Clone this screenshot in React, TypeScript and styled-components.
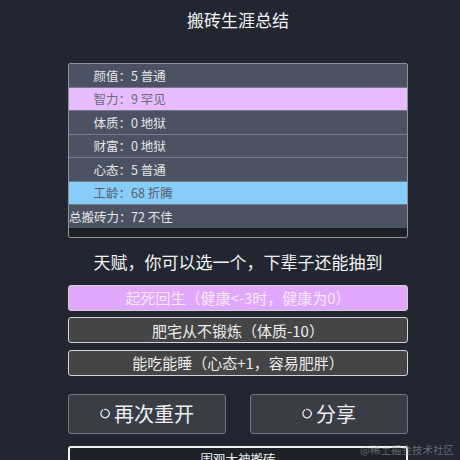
import styled, { createGlobalStyle } from 'styled-components'

const GlobalStyle = createGlobalStyle`
  html, body {
    margin: 0;
    padding: 0;
    background: #222630;
    font-family: "Noto Sans CJK SC", "Noto Sans", sans-serif;
    overflow: hidden;
  }
`

type Tone = 'plain' | 'purple' | 'blue'

const stats: { label: string; value: string; tone: Tone }[] = [
  { label: '颜值：', value: '5 普通', tone: 'plain' },
  { label: '智力：', value: '9 罕见', tone: 'purple' },
  { label: '体质：', value: '0 地狱', tone: 'plain' },
  { label: '财富：', value: '0 地狱', tone: 'plain' },
  { label: '心态：', value: '5 普通', tone: 'plain' },
  { label: '工龄：', value: '68 折腾', tone: 'blue' },
  { label: '总搬砖力：', value: '72 不佳', tone: 'plain' },
]

const talents = [
  { text: '起死回生（健康<-3时，健康为0）', picked: true },
  { text: '肥宅从不锻炼（体质-10）', picked: false },
  { text: '能吃能睡（心态+1，容易肥胖）', picked: false },
]

const rowBg: Record<Tone, string> = {
  plain: '#4b5261',
  purple: '#e6bcff',
  blue: '#87cdf9',
}

const rowInk: Record<Tone, string> = {
  plain: '#e4e6ea',
  purple: '#6e6a78',
  blue: '#56606a',
}

function Spinner() {
  return (
    <svg width="11" height="11" viewBox="0 0 12 12">
      <path
        d="M3 2.2 A4.6 4.6 0 1 0 5.2 1.45"
        fill="none"
        stroke="#e8e8ea"
        strokeWidth="1.4"
        strokeLinecap="round"
      />
    </svg>
  )
}

export default function App() {
  return (
    <>
      <GlobalStyle />
      <Page>
        <Main>
          <Title>搬砖生涯总结</Title>
          <StatTable>
            {stats.map(s => (
              <StatRow key={s.label} $tone={s.tone}>
                <StatLabel>{s.label}</StatLabel>
                <span>{s.value}</span>
              </StatRow>
            ))}
            <TableTail />
          </StatTable>
          <Subtitle>天赋，你可以选一个，下辈子还能抽到</Subtitle>
          <TalentList>
            {talents.map(t => (
              <TalentButton key={t.text} $picked={t.picked}>
                {t.text}
              </TalentButton>
            ))}
          </TalentList>
          <ActionRow>
            <ActionButton>
              <Spinner />
              再次重开
            </ActionButton>
            <ActionButton>
              <Spinner />
              分享
            </ActionButton>
          </ActionRow>
          <WatchButton>围观大神搬砖</WatchButton>
        </Main>
        <Watermark>@稀土掘金技术社区</Watermark>
      </Page>
    </>
  )
}

const Page = styled.div`
  position: relative;
  width: 460px;
  height: 460px;
  overflow: hidden;
  padding-top: 8px;
  box-sizing: border-box;
`

const Main = styled.div`
  width: 340px;
  margin-left: 68px;
  display: flex;
  flex-direction: column;
`

const Title = styled.div`
  font-size: 17px;
  line-height: 24px;
  color: #f2f3f5;
  text-align: center;
`

const StatTable = styled.div`
  margin-top: 31px;
  border: 1px solid #8d939c;
  border-radius: 2px;
  background: #1d2027;
  display: flex;
  flex-direction: column;
`

const StatRow = styled.div<{ $tone: Tone }>`
  height: 22.5px;
  display: flex;
  align-items: center;
  font-size: 12.5px;
  background: ${p => rowBg[p.$tone]};
  color: ${p => rowInk[p.$tone]};
  & + & {
    border-top: 1px solid #767c86;
  }
`

const StatLabel = styled.span`
  width: 62px;
  text-align: right;
  white-space: nowrap;
`

const TableTail = styled.div`
  height: 9px;
`

const Subtitle = styled.div`
  margin-top: 12px;
  font-size: 17px;
  line-height: 24px;
  color: #f2f3f5;
  text-align: center;
`

const TalentList = styled.div`
  margin-top: 11px;
  display: flex;
  flex-direction: column;
  gap: 6.5px;
`

const TalentButton = styled.div<{ $picked: boolean }>`
  height: 26px;
  box-sizing: border-box;
  border: 1.5px solid #d4d4d6;
  border-radius: 3px;
  background: ${p => (p.$picked ? '#e0a7fc' : '#454545')};
  color: ${p => (p.$picked ? '#f6e8ff' : '#ededed')};
  font-size: 15px;
  display: flex;
  align-items: center;
  justify-content: center;
`

const ActionRow = styled.div`
  margin-top: 18px;
  display: grid;
  grid-template-columns: 158px 158px;
  justify-content: space-between;
`

const ActionButton = styled.div`
  height: 40px;
  box-sizing: border-box;
  border: 1px solid #74777f;
  border-radius: 3px;
  background: #3a3d46;
  color: #f0f0f2;
  font-size: 20px;
  display: flex;
  align-items: center;
  justify-content: center;
  gap: 3px;
`

const WatchButton = styled.div`
  margin-top: 12px;
  height: 30px;
  box-sizing: border-box;
  border: 2px solid #f2f2f2;
  border-radius: 3px;
  background: #1e2128;
  color: #f0f0f2;
  font-size: 12.5px;
  text-align: center;
  padding-top: 1px;
`

const Watermark = styled.div`
  position: absolute;
  right: 6px;
  bottom: 3px;
  font-size: 10.5px;
  color: rgba(160, 164, 172, 0.55);
  white-space: nowrap;
`
